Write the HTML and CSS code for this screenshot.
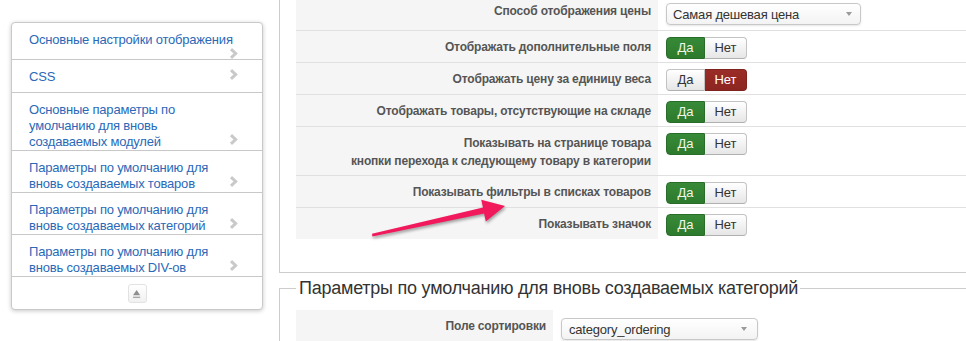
FILE: index.html
```html
<!DOCTYPE html>
<html lang="ru">
<head>
<meta charset="utf-8">
<title>Настройки отображения</title>
<link rel="stylesheet" href="styles.css">
</head>
<body>
<div class="page">
  <aside class="sidebar">
    <ul class="nav">
      <li class="nav-item"><a class="nav-link" href="#">Основные настройки отображения<svg class="chev" viewBox="0 0 9 11"><path d="M2 1.2 L6.6 5.5 L2 9.8"/></svg></a></li>
      <li class="nav-item"><a class="nav-link" href="#">CSS<svg class="chev" viewBox="0 0 9 11"><path d="M2 1.2 L6.6 5.5 L2 9.8"/></svg></a></li>
      <li class="nav-item"><a class="nav-link" href="#">Основные параметры по умолчанию для вновь создаваемых модулей<svg class="chev" viewBox="0 0 9 11"><path d="M2 1.2 L6.6 5.5 L2 9.8"/></svg></a></li>
      <li class="nav-item"><a class="nav-link" href="#">Параметры по умолчанию для вновь создаваемых товаров<svg class="chev" viewBox="0 0 9 11"><path d="M2 1.2 L6.6 5.5 L2 9.8"/></svg></a></li>
      <li class="nav-item"><a class="nav-link" href="#">Параметры по умолчанию для вновь создаваемых категорий<svg class="chev" viewBox="0 0 9 11"><path d="M2 1.2 L6.6 5.5 L2 9.8"/></svg></a></li>
      <li class="nav-item"><a class="nav-link" href="#">Параметры по умолчанию для вновь создаваемых DIV-ов<svg class="chev" viewBox="0 0 9 11"><path d="M2 1.2 L6.6 5.5 L2 9.8"/></svg></a></li>
    </ul>
    <div class="nav-foot">
      <span class="eject"><svg viewBox="0 0 19 19" width="17" height="17"><path class="eject-tri" d="M4.5 11.5 L8.5 5.5 L12.5 11.5 Z"/><rect class="eject-bar" x="4.5" y="13" width="8" height="1.6"/></svg></span>
    </div>
  </aside>

  <main class="main">
    <fieldset class="panel panel--cut">
      <div class="rows rows--wide">
        <div class="row">
          <div class="label">Способ отображения цены</div>
          <div class="control"><div class="select select--price"><span>Самая дешевая цена</span><span class="caret"></span></div></div>
        </div>
        <div class="row">
          <div class="label">Отображать дополнительные поля</div>
          <div class="control"><div class="toggle"><span class="tbtn tbtn--yes tbtn--on-yes">Да</span><span class="tbtn tbtn--no">Нет</span></div></div>
        </div>
        <div class="row">
          <div class="label">Отображать цену за единицу веса</div>
          <div class="control"><div class="toggle"><span class="tbtn tbtn--yes">Да</span><span class="tbtn tbtn--no tbtn--on-no">Нет</span></div></div>
        </div>
        <div class="row">
          <div class="label">Отображать товары, отсутствующие на складе</div>
          <div class="control"><div class="toggle"><span class="tbtn tbtn--yes tbtn--on-yes">Да</span><span class="tbtn tbtn--no">Нет</span></div></div>
        </div>
        <div class="row">
          <div class="label">Показывать на странице товара<br>кнопки перехода к следующему товару в категории</div>
          <div class="control"><div class="toggle"><span class="tbtn tbtn--yes tbtn--on-yes">Да</span><span class="tbtn tbtn--no">Нет</span></div></div>
        </div>
        <div class="row">
          <div class="label">Показывать фильтры в списках товаров</div>
          <div class="control"><div class="toggle"><span class="tbtn tbtn--yes tbtn--on-yes">Да</span><span class="tbtn tbtn--no">Нет</span></div></div>
        </div>
        <div class="row">
          <div class="label">Показывать значок</div>
          <div class="control"><div class="toggle"><span class="tbtn tbtn--yes tbtn--on-yes">Да</span><span class="tbtn tbtn--no">Нет</span></div></div>
        </div>
      </div>
    </fieldset>

    <fieldset class="panel">
      <legend class="legend">Параметры по умолчанию для вновь создаваемых категорий</legend>
      <div class="rows rows--narrow">
        <div class="row">
          <div class="label">Поле сортировки</div>
          <div class="control"><div class="select select--sort"><span>category_ordering</span><span class="caret"></span></div></div>
        </div>
      </div>
    </fieldset>
  </main>

  <svg class="annotation" viewBox="0 0 966 341" width="966" height="341">
    <polygon class="arrow" points="372,233.8 483,207.6 481.2,199.8 505,206 485.8,221.6 484.1,213.6 372.4,236.4"/>
  </svg>
</div>
</body>
</html>
```

FILE: styles.css
```css
* { box-sizing: border-box; }

html, body {
  margin: 0;
  padding: 0;
  background: #fff;
  overflow: hidden;
}

body {
  font-family: "Liberation Sans", Arial, sans-serif;
  font-size: 13px;
  color: #333;
}

.page {
  position: relative;
  display: flex;
  align-items: flex-start;
  width: 966px;
  height: 341px;
  overflow: hidden;
}

/* Sidebar */
.sidebar {
  flex: none;
  width: 252px;
  margin: 22px 16px 0 11px;
  border: 1px solid #c9c9c9;
  border-radius: 4px;
  background: #fff;
  box-shadow: 0 1px 4px rgba(0, 0, 0, 0.22);
}

.nav {
  list-style: none;
  margin: 0;
  padding: 0;
}

.nav-item {
  border-bottom: 1px solid #c8c8c8;
}

.nav-link {
  display: flow-root;
  min-height: 32px;
  padding: 9px 24px 0 17px;
  font-size: 13px;
  line-height: 16px;
  letter-spacing: -0.2px;
  color: #2a69b8;
  text-decoration: none;
}

.chev {
  float: right;
  width: 9px;
  height: 11px;
}

.chev path {
  fill: none;
  stroke: #c9c9c9;
  stroke-width: 3;
}

.nav-foot {
  display: flex;
  align-items: center;
  justify-content: center;
  height: 32px;
}

.eject {
  display: flex;
  align-items: center;
  justify-content: center;
  width: 19px;
  height: 19px;
  border: 1px solid #e2e2e2;
  border-radius: 3px;
  background: linear-gradient(#ffffff, #f1f1f1);
}

.eject-tri { fill: #8e8e8e; }
.eject-bar { fill: #a8a8a8; }

/* Main */
.main {
  flex: 1;
  min-width: 0;
  margin-right: -6px;
}

.panel {
  margin: 5px 0 0;
  padding: 12px 0 33px 16px;
  border: 1px solid #cccccc;
  min-width: 0;
}

.panel--cut {
  margin-top: 0;
  padding-top: 0;
  border-top: 0;
}

.panel--cut .rows {
  margin-top: -5px;
}

.legend {
  padding: 0 2px 0 3px;
  font-size: 18px;
  line-height: 20px;
  letter-spacing: -0.24px;
  color: #333;
}

.row {
  display: grid;
  grid-template-columns: 362px 1fr;
  border-bottom: 1px solid #e0e0e0;
}

.rows--narrow .row {
  grid-template-columns: 257px 1fr;
}

.row:last-child {
  border-bottom: 0;
}

.label {
  padding: 7px 7px 5px;
  background: #f5f5f5;
  text-align: right;
  font-weight: bold;
  font-size: 12px;
  line-height: 18px;
  letter-spacing: -0.17px;
  color: #555;
}

.control {
  padding: 6px 8px 3px;
}

/* Toggle buttons */
.toggle {
  display: inline-flex;
}

.tbtn {
  display: block;
  height: 22px;
  font-size: 13px;
  line-height: 20px;
  text-align: center;
  color: #333;
  border: 1px solid #c3c3c3;
  border-bottom-color: #b0b0b0;
  background: linear-gradient(#ffffff, #e6e6e6);
}

.tbtn--yes {
  width: 39px;
  border-radius: 4px 0 0 4px;
}

.tbtn--no {
  width: 42px;
  border-left: 0;
  border-radius: 0 4px 4px 0;
}

.tbtn--on-yes {
  color: #eef6ee;
  background: linear-gradient(#378a37, #2d7a2d);
  border-color: #2a6d2a;
}

.tbtn--on-no {
  color: #fff;
  background: linear-gradient(#9b2c27, #8c2520);
  border-color: #7e221e;
}

/* Selects */
.select {
  display: flex;
  align-items: center;
  justify-content: space-between;
  height: 22px;
  margin: 2px 0;
  padding: 0 8px 0 6px;
  font-size: 13px;
  letter-spacing: -0.2px;
  color: #333;
  border: 1px solid #c8c8c8;
  border-radius: 4px;
  background: linear-gradient(#ffffff, #f3f3f3);
  box-shadow: 0 1px 2px rgba(0, 0, 0, 0.1);
}

.select--price { width: 195px; }

.select--sort {
  width: 197px;
  padding: 0 10px 0 7px;
}

.caret {
  width: 0;
  height: 0;
  border-left: 3px solid transparent;
  border-right: 3px solid transparent;
  border-top: 4px solid #9a9a9a;
}

/* Annotation arrow */
.annotation {
  position: absolute;
  left: 0;
  top: 0;
  pointer-events: none;
}

.arrow {
  fill: #f2185c;
  filter: drop-shadow(1px 2px 1.5px rgba(0, 0, 0, 0.35));
}
```
